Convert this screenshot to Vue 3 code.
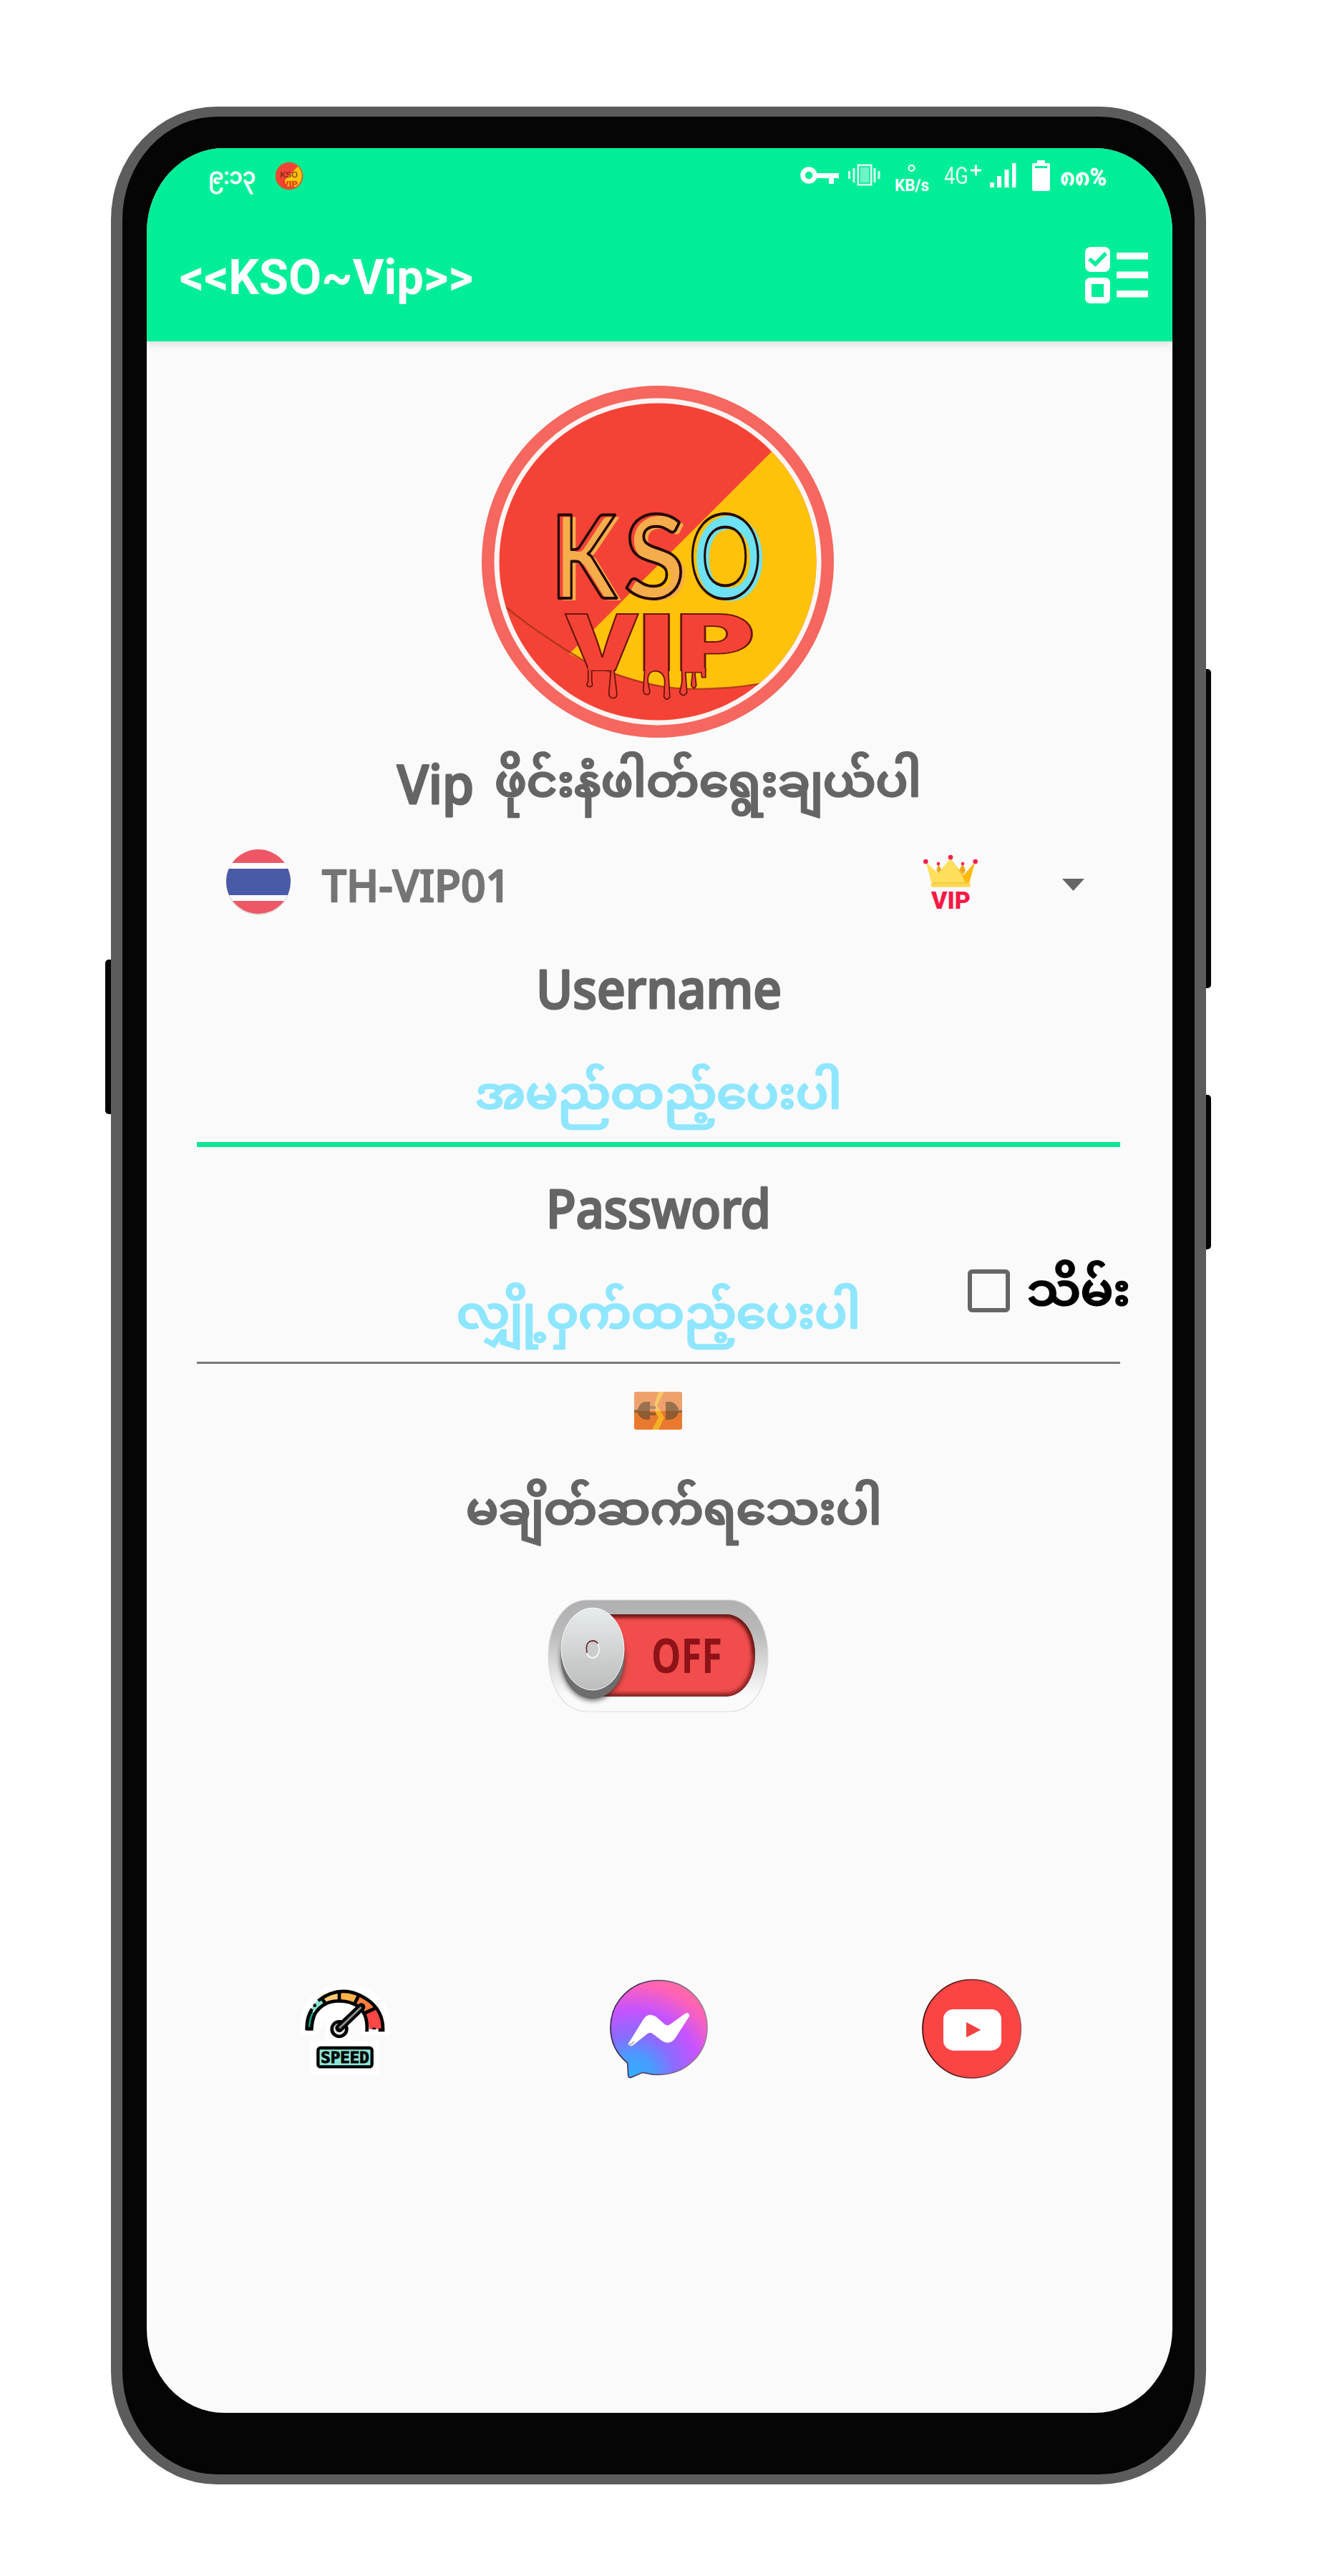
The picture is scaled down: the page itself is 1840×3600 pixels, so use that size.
<script setup>
import { h } from 'vue'

// Single line of text fitted to an exact width
const FitText = (props) =>
  h('svg', { width: props.w, height: props.h, viewBox: `0 0 ${props.w} ${props.h}`, overflow: 'visible' }, [
    h('text', {
      x: 0, y: props.base, 'font-size': props.size, fill: 'currentColor',
      textLength: props.w, lengthAdjust: 'spacingAndGlyphs',
    }, props.text),
  ])
FitText.props = ['w', 'h', 'base', 'size', 'text']
</script>

<template>
  <div class="page">
    <i class="key left"></i>
    <i class="key right long"></i>
    <i class="key right short"></i>
    <div class="phone">
      <div class="screen">
        <header>
          <div class="status">
            <FitText class="time" :w="66" :h="60" :base="43" :size="31" text="၉:၁၃" />
            <svg class="mini" width="40" height="40" viewBox="0 0 40 40">
              <circle cx="20" cy="20" r="19.5" fill="#b9702d" />
              <circle cx="20" cy="20" r="18" fill="#f44336" />
              <path d="M32 6.500A18 18 0 0 1 29 35L14 34V26Z" fill="#fec20a" />
              <text x="7" y="22" font-size="11" textLength="25" lengthAdjust="spacingAndGlyphs" fill="#6b2a12">KSO</text>
              <text x="11" y="35" font-size="11" font-weight="900" textLength="21" lengthAdjust="spacingAndGlyphs" fill="#e5381f">VIP</text>
            </svg>
            <span class="spacer"></span>
            <svg width="440" height="60" viewBox="0 0 440 60" fill="#fff">
              <circle cx="12" cy="31" r="8.500" fill="none" stroke="#fff" stroke-width="6.500" />
              <path d="M22 28H54V35H47V43H40V35H22Z" />
              <g opacity=".85">
                <rect x="81" y="17" width="18" height="27" fill="#80f7cd" stroke="#fff" stroke-width="3" />
                <rect x="83" y="19" width="14" height="23" fill="none" stroke="#0be096" stroke-width="1.500" />
                <path d="M67 25h3v11h-3zM73.500 21h3v20h-3zM102.500 21h3v20h-3zM108.500 25h3v11h-3z" />
              </g>
              <circle cx="155.500" cy="21" r="4" fill="none" stroke="#fff" stroke-width="2" />
              <text x="132" y="53" font-size="23" font-weight="700" textLength="48" lengthAdjust="spacingAndGlyphs">KB/s</text>
              <text x="201" y="43" font-size="34" textLength="34" lengthAdjust="spacingAndGlyphs" opacity=".9">4G</text>
              <path d="M238 22.500h6v-6h3v6h6v3h-6v6h-3v-6h-6z" />
              <path d="M265 41h6v7h-6zM275 32h6v16h-6zM285.500 23h6v25h-6zM296 14h5.500v34H296z" />
              <path fill-rule="evenodd" d="M331 10h11v4h5q2 0 2 3v33q0 3-3 3h-19q-3 0-3-3V17q0-3 2-3h5zM328 18v3h17v-3z" />
              <text x="363" y="45" font-size="33" font-weight="500" stroke="#fff" stroke-width=".8" textLength="65" lengthAdjust="spacingAndGlyphs">၈၈%</text>
            </svg>
          </div>
          <div class="bar">
            <FitText class="brand" :w="410" :h="90" :base="66" :size="68" text="<<KSO~Vip>>" />
            <svg width="90" height="80" viewBox="0 0 90 80" fill="#fff">
              <rect x="0" y="0" width="35" height="35" rx="8" />
              <path d="M6 17L14.500 24L29 9" fill="none" stroke="#00ee98" stroke-width="5.500" />
              <path fill-rule="evenodd" d="M8 43h19q8 0 8 8v20q0 8-8 8H8q-8 0-8-8V51q0-8 8-8zM9 52v18h17V52z" />
              <path d="M44 8h44v9.500H44zM44 34.500h44V44H44zM44 61h44v9.500H44z" />
            </svg>
          </div>
        </header>

        <main>
          <svg class="logo" width="492" height="492" viewBox="0 0 492 492">
            <defs>
              <clipPath id="disc"><circle cx="246" cy="246" r="221.500" /></clipPath>
              <text id="letter-k" class="kso" x="130" y="316" textLength="91" lengthAdjust="spacingAndGlyphs">K</text>
              <text id="letter-s" class="kso" x="232" y="316" textLength="85" lengthAdjust="spacingAndGlyphs">S</text>
              <text id="letter-o" class="kso" x="323" y="316" textLength="101" lengthAdjust="spacingAndGlyphs">O</text>
            </defs>
            <circle cx="246" cy="246" r="246" fill="#f5675f" />
            <circle cx="246" cy="246" r="228.500" fill="#fef5f3" />
            <g clip-path="url(#disc)">
              <rect width="492" height="492" fill="#f44336" />
              <g transform="translate(-33.300 -19.300) scale(.35714 .33333)">
                <path d="M1228 334L436 1182Q640 1290 840 1325Q1010 1340 1190 1305L1500 1200V334Z" fill="#fec20a" />
                <path d="M190 988Q330 1110 500 1215Q690 1310 850 1326Q1010 1338 1185 1307" fill="none" stroke="#9c3018" stroke-opacity=".75" stroke-width="7" />
              </g>
            </g>
            <g transform="translate(-33.300 -19.300)">
              <use href="#letter-k" x="6" y="3" fill="#f5ad4c" />
              <use href="#letter-s" x="6" y="3" fill="#f5ad4c" />
              <use href="#letter-o" x="6" y="3" fill="#6ce2f4" />
              <g fill="none" stroke="#260805" stroke-width="4" stroke-linejoin="round">
                <use href="#letter-k" />
                <use href="#letter-s" />
                <use href="#letter-o" />
              </g>
            </g>
            <g transform="translate(-33.300 -19.300)" class="vip" fill="#f44336" stroke="#6a150b" stroke-width="1.800">
              <text x="147" y="417" textLength="108" lengthAdjust="spacingAndGlyphs">V</text>
              <text x="252" y="417" textLength="51" lengthAdjust="spacingAndGlyphs">I</text>
              <text x="304" y="417" textLength="111" lengthAdjust="spacingAndGlyphs">P</text>
              <path d="M182 416V432Q178 440 184 440Q190 440 187 432V418M214 416L211 448Q211 456 217 456Q223 456 222 448L218 416M261 416L259 445Q260 451 264 451Q269 451 268 445C262 425 267 418 277 418Q289 420 289 434L288 454Q292 461 296 454L294 416M313 416V434L310 448Q315 456 320 448L318 420H328L326 438Q330 446 333 438L331 420H340L341 427H346V414" />
              <path d="M182 412H218V417H182zM262 410H293V417H262zM314 410H343V419H314z" stroke="none" />
            </g>
          </svg>

          <div class="row headline">
            <FitText class="latin" :w="107" :h="129" :base="92" :size="74" text="Vip" />
            <FitText class="burmese" :w="596" :h="129" :base="82" :size="62" text="ဖိုင်းနံဖါတ်ရွေးချယ်ပါ" />
          </div>

          <div class="row server">
            <svg width="94" height="100" viewBox="0 0 94 100">
              <defs><clipPath id="flag"><circle cx="47" cy="49" r="45" /></clipPath></defs>
              <circle cx="47" cy="51" r="45" fill="#dedede" />
              <g clip-path="url(#flag)">
                <rect width="94" height="100" fill="#ee5866" />
                <rect y="23" width="94" height="53" fill="#fff" />
                <rect y="31" width="94" height="37" fill="#495aa6" />
              </g>
            </svg>
            <FitText class="name" :w="263" :h="144" :base="99" :size="62" text="TH-VIP01" />
            <span class="spacer"></span>
            <svg width="80" height="86" viewBox="0 0 80 86">
              <g transform="translate(-17 -20) scale(.33333)">
                <path d="M115 140L123 112L138 140L123 152ZM210 138L225 112L237 138L228 156Z" fill="#f0a81c" />
                <path d="M174 90L228 160L277 104L252 192H200Z" fill="#ffb90f" />
                <path d="M71 104L122 152L174 88L222 160L238 194H95Z" fill="#ffdf5c" />
                <rect x="92" y="191" width="166" height="18" rx="9" fill="#ffd750" />
                <path d="M98 191H250" stroke="#eebd3a" stroke-width="3" />
                <g fill="#f4204c">
                  <circle cx="70" cy="102" r="10" /><circle cx="123" cy="111" r="7" /><circle cx="174" cy="84" r="10" /><circle cx="225" cy="111" r="7" /><circle cx="278" cy="102" r="10" />
                </g>
              </g>
              <text class="crown" x="14" y="80" font-size="34" textLength="55" lengthAdjust="spacing" fill="#f81846">VIP</text>
            </svg>
            <svg class="caret" width="31" height="17" viewBox="0 0 31 17"><path d="M0 0H31L15.500 17Z" fill="#666" /></svg>
          </div>

          <div class="row label-user"><FitText class="latin" :w="343" :h="146" :base="104" :size="75" text="Username" /></div>
          <div class="field active"><FitText class="burmese" :w="512" :h="145" :base="98" :size="62" text="အမည်ထည့်ပေးပါ" /></div>
          <div class="row label-pass"><FitText class="latin" :w="314" :h="148" :base="113" :size="75" text="Password" /></div>
          <div class="field">
            <FitText class="burmese" :w="564" :h="152" :base="105" :size="62" text="လျှို့ဝှက်ထည့်ပေးပါ" />
            <label class="save">
              <i class="box"></i>
              <FitText class="burmese" :w="144" :h="100" :base="73" :size="62" text="သိမ်း" />
            </label>
          </div>

          <div class="row plug">
            <svg width="67" height="53" viewBox="0 0 67 53">
              <defs><clipPath id="plug"><rect width="67" height="53" rx="3" /></clipPath></defs>
              <g clip-path="url(#plug)">
                <rect width="67" height="53" fill="#e9792e" />
                <path d="M34 0H42L32 19L42 36L34 53H25L34 36L27 22Z" fill="#f2b124" />
                <path d="M0 25H5Q8 14 17 14H22V20H30V24H22V29H30V33H22V39H17Q7 38 5 29H0ZM44 14H50Q59 15 62 25H67V29H62Q59 38 50 39H44Z" fill="#8f5b30" />
                <rect width="67" height="27" fill="#fff" opacity=".3" />
                <path d="M0 25H5Q8 14 17 14H22V27H0ZM44 14H50Q59 15 62 25V27H44Z" fill="#8f6640" opacity=".7" />
              </g>
            </svg>
          </div>

          <div class="row state"><FitText class="burmese" :w="581" :h="155" :base="104" :size="62" text="မချိတ်ဆက်ရသေးပါ" /></div>

          <svg class="toggle" width="310" height="170" viewBox="0 0 310 170">
            <defs>
              <linearGradient id="rim" x2="0" y2="1"><stop offset="0" stop-color="#b0b0b0" /><stop offset=".3" stop-color="#bababa" /><stop offset=".85" stop-color="#fafafa" /></linearGradient>
              <linearGradient id="knob" x2="0" y2="1"><stop offset="0" stop-color="#e7ecec" /><stop offset="1" stop-color="#bcbcbc" /></linearGradient>
              <filter id="soft" x="-20%" y="-20%" width="140%" height="140%"><feGaussianBlur stdDeviation="3" /></filter>
              <clipPath id="track"><path d="M60 21H248C273 21 290 45 290 78S273 136 248 136H60Z" /></clipPath>
            </defs>
            <path d="M55 1H254C286 1 308 36 308 79S286 157 254 157H55C23 157 1 122 1 79S23 1 55 1Z" fill="url(#rim)" stroke="#ddd" stroke-width="1.200" />
            <g clip-path="url(#track)">
              <rect x="40" y="15" width="260" height="125" fill="#f14d4d" />
              <path d="M30 21H248C273 21 290 45 290 78S273 136 248 136H30" fill="none" stroke="#4a0b0b" stroke-width="6" filter="url(#soft)" />
              <path d="M30 21H248C273 21 290 45 290 78" fill="none" stroke="#3b1111" stroke-width="3" filter="url(#soft)" />
            </g>
            <text x="145" y="103" font-size="67" font-weight="700" textLength="99" lengthAdjust="spacingAndGlyphs" fill="#8e1217">OFF</text>
            <ellipse cx="63" cy="84" rx="45" ry="58" fill="#222" opacity=".6" filter="url(#soft)" />
            <ellipse cx="63" cy="81" rx="44.500" ry="58" fill="#6d6d6d" />
            <ellipse cx="63" cy="69.500" rx="44" ry="57.500" fill="url(#knob)" stroke="#f4f4f4" stroke-width="1" />
            <ellipse cx="63" cy="70" rx="9" ry="12" fill="#ccc" stroke="#fff" stroke-width="1.500" />
            <path d="M55 75Q52 59 63 58Q68 58 70 62" fill="none" stroke="#6b3535" stroke-width="1.800" />
          </svg>

          <nav>
            <svg width="180" height="180" viewBox="0 0 540 540">
              <path d="M62 305V260C75 50 415 40 432 260V305H320V240H268V340H382V470H108V340H170V230L120 305Z" fill="#fff" stroke="#fff" stroke-width="8" stroke-linejoin="round" />
              <path d="M95 285A150 150 0 0 1 112 213" fill="none" stroke="#14a58c" stroke-width="26" />
              <path d="M120 207Q133 181 154 164" fill="none" stroke="#86e3cf" stroke-width="34" />
              <path d="M154 163Q185 142 222 143" fill="none" stroke="#ffcb73" stroke-width="38" />
              <path d="M224 144Q266 143 298 160" fill="none" stroke="#ffb347" stroke-width="42" />
              <path d="M298 158Q335 174 359 206" fill="none" stroke="#fe7e3d" stroke-width="46" />
              <path d="M352 205Q373 240 374 284" fill="none" stroke="#fd4747" stroke-width="54" />
              <g fill="none" stroke="#000" stroke-width="14">
                <path d="M86 288Q84 236 108 200M134 165Q240 85 350 168Q407 214 405 288H386M368 286V278M345 288H338Q344 184 246 168Q160 156 120 220Q108 248 106 283H82" />
                <path d="M222 126V168M304 142L285 180M370 198L330 216M148 155L166 178" />
                <circle cx="222" cy="284" r="31" stroke="#000" fill="#e2e2e2" />
                <path d="M222 280L314 192" stroke-width="34" stroke-linecap="round" />
                <path d="M222 280L314 192" stroke="#8a8a8a" stroke-width="9" />
              </g>
              <circle cx="119" cy="185" r="7" />
              <rect x="133" y="363" width="226" height="79" rx="10" fill="#8ce6d6" stroke="#000" stroke-width="13" />
              <text x="145" y="427" font-size="64" textLength="202" lengthAdjust="spacingAndGlyphs" stroke="#000" stroke-width="3" class="mono">SPEED</text>
            </svg>
            <svg width="200" height="190" viewBox="0 0 600 570">
              <defs>
                <radialGradient id="msg" gradientUnits="userSpaceOnUse" cx="190" cy="490" r="480"><stop offset="0" stop-color="#2fb0ff" /><stop offset=".2" stop-color="#4a9bff" /><stop offset=".38" stop-color="#8b6bff" /><stop offset=".6" stop-color="#c653ff" /><stop offset=".82" stop-color="#ff62b8" /><stop offset="1" stop-color="#ff7590" /></radialGradient>
                <linearGradient id="edge"><stop offset="0" stop-color="#33204e" /><stop offset="1" stop-color="#9f809f" /></linearGradient>
              </defs>
              <path d="M301 80C415 80 504 168 504 278S415 475 301 475Q268 475 234 466L184 487Q174 489 173 478L170 426C126 390 99 338 99 278C99 168 187 80 301 80Z" fill="url(#msg)" stroke="url(#edge)" stroke-width="5" />
              <path d="M176 341L237 242Q257 212 289 232L325 263Q337 273 349 264L413 218Q428 212 430 229L371 321Q351 351 319 336L278 305Q267 295 255 302L195 350Q178 361 172 346Z" fill="#fff" />
              <path d="M178 350Q190 346 196 338" fill="none" stroke="#bbb" stroke-width="7" stroke-linecap="round" />
            </svg>
            <svg width="200" height="190" viewBox="0 0 600 570">
              <defs><linearGradient id="yt"><stop offset="0" stop-color="#3d0808" /><stop offset="1" stop-color="#a85a5a" /></linearGradient></defs>
              <circle cx="293" cy="283" r="206" fill="#fb4444" stroke="url(#yt)" stroke-width="5" />
              <rect x="174" y="201" width="243" height="173" rx="42" fill="#fff" />
              <path d="M270 255L331 287L270 319Z" fill="#f24141" />
            </svg>
          </nav>
        </main>
      </div>
    </div>
  </div>
</template>

<style>
body { margin: 0; background: #fff; }
</style>

<style scoped>
.page {
  position: relative; box-sizing: border-box; width: 1840px; height: 3600px; padding: 149px 155px 128px;
  background: #fff; font-family: Roboto, "Noto Sans", "Noto Sans Myanmar", Padauk, sans-serif;
}
.page svg { display: block; flex: none; }
.key { position: absolute; background: #050505; }
.key.left { left: 147px; top: 1341px; width: 14px; height: 216px; border-radius: 5px 0 0 5px; }
.key.right { left: 1679px; width: 13px; border-radius: 0 5px 5px 0; }
.key.long { top: 935px; height: 446px; }
.key.short { top: 1530px; height: 216px; }
.phone {
  position: relative; box-sizing: border-box; width: 1530px; height: 3323px; background: #050505;
  border: solid #5c5c5c; border-width: 14px 16px; border-radius: 148px / 158px; padding: 44px 31px 86px 34px;
}
.screen {
  width: 1433px; height: 3165px; background: #fafafa; overflow: hidden;
  border-radius: 108px / 118px; display: flex; flex-direction: column;
}
header { height: 270px; background: #00ee98; color: #fff; box-shadow: 0 2px 12px rgba(0, 0, 0, .16); flex: none; }
.status { display: flex; height: 93px; padding: 7px 80px 0 86px; box-sizing: border-box; }
.time { font-weight: 500; stroke: currentColor; stroke-width: .8; }
.mini { margin: 12px 0 0 27px; }
.spacer { flex: 1; }
.bar { display: flex; justify-content: space-between; padding: 45px 32px 0 46px; }
.brand { font-weight: 700; }
main { color: #656565; display: flex; flex-direction: column; font-family: "Noto Sans", "Noto Sans Myanmar", Padauk, sans-serif; font-weight: 500; }
.latin { stroke: currentColor; stroke-width: 3; stroke-linejoin: round; }
.burmese { stroke: currentColor; stroke-width: 2.6; stroke-linejoin: round; }
.logo { margin: 62px 0 0 468px; }
.kso { font: 700 161px Lato, sans-serif; }
.vip text { font: 900 108px Inter, sans-serif; }
.row { display: flex; flex: none; }
.headline { height: 130px; gap: 29px; padding-left: 350px; }
.server { height: 144px; align-items: center; padding: 0 123px 0 109px; }
.server .name { margin-left: 42px; color: #757575; stroke: currentColor; stroke-width: 2.4; stroke-linejoin: round; }
.server .caret { margin: 6px 0 0 117px; }
.crown { font: 900 34px Roboto, sans-serif; }
.label-user { height: 146px; padding-left: 544px; }
.label-pass { height: 148px; padding-left: 558px; }
.field {
  position: relative; display: flex; justify-content: center; box-sizing: border-box; height: 155px;
  margin: 0 73px 0 70px; border-bottom: 3px solid #777; color: #8fe6ff;
}
.field.active { height: 152px; border-bottom: 7px solid #0ee697; }
.save { position: absolute; right: -14px; top: 0; display: flex; color: #000; gap: 24px; }
.box { box-sizing: border-box; width: 59px; height: 60px; margin-top: 23px; border: 6px solid #666; border-radius: 6px; }
.plug { height: 120px; box-sizing: border-box; padding: 39px 0 0 681px; }
.state { height: 155px; padding-left: 446px; }
.toggle { margin: 54px 0 0 560px; }
nav { display: flex; gap: 240px; margin: 336px 0 0 195px; }
.mono { font-family: "DejaVu Sans Mono", monospace; font-weight: 700; }
</style>
